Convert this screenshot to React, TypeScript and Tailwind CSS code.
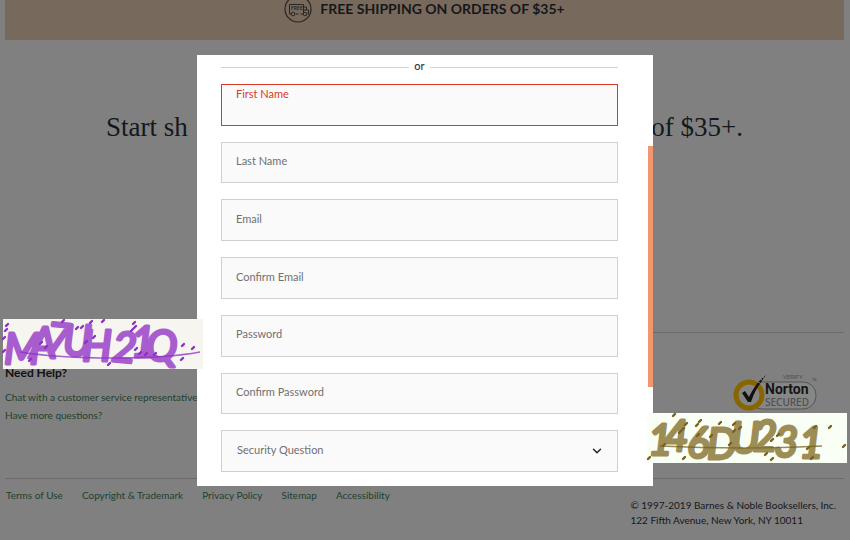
import React from "react";
import { ChevronDown } from "lucide-react";

type Dot = [number, number];

interface ScrawlProps {
  label: string;
  letters: string;
  xs: string;
  ys: string;
  rotate: string;
  ink: string;
  dotInk: string;
  paper: string;
  line: string;
  dots: Dot[];
}

function Scrawl({ label, letters, xs, ys, rotate, ink, dotInk, paper, line, dots }: ScrawlProps) {
  return (
    <svg width="200" height="50" viewBox="0 0 200 50" role="img" aria-label={label} className="block overflow-visible">
      <rect width="200" height="50" fill={paper} />
      <text
        x={xs}
        y={ys}
        rotate={rotate}
        fill={ink}
        stroke={ink}
        strokeWidth="3"
        strokeLinejoin="round"
        fontSize="42"
        fontStyle="italic"
        fontFamily="Lato, sans-serif"
      >
        {letters}
      </text>
      <path d={line} fill="none" stroke={dotInk} strokeWidth="1.4" opacity="0.75" />
      {dots.map(([x, y]) => (
        <path key={`${x}-${y}`} d={`M${x - 1} ${y + 1}l2-2`} stroke={dotInk} strokeWidth="2.4" strokeLinecap="round" />
      ))}
    </svg>
  );
}

const purpleDots: Dot[] = [
  [4, 6], [3, 11], [1, 19], [1, 32], [60, 2], [38, 24], [43, 28], [27, 41], [74, 9], [79, 8], [88, 3],
  [100, 2], [83, 23], [91, 18], [106, 45], [131, 4], [132, 8], [129, 11], [133, 30], [137, 34], [143, 35],
  [152, 35], [180, 26], [190, 29], [179, 40],
];
const oliveDots: Dot[] = [
  [2, 45], [27, 2], [17, 32], [37, 45], [39, 11], [36, 16], [33, 19], [53, 8], [50, 12], [51, 22], [64, 23],
  [73, 10], [87, 11], [87, 18], [93, 15], [83, 31], [119, 41], [125, 46], [125, 27], [131, 22], [165, 45],
  [161, 35], [168, 14], [183, 14], [197, 33],
];

function TruckBadge() {
  return (
    <svg width="28" height="28" viewBox="0 0 28 28" fill="none" stroke="#292724" aria-hidden="true">
      <circle cx="14" cy="14" r="13" strokeWidth="1.2" />
      <path d="M7 19H5.500V9.500h14V19h-3M11.500 19h3M19.500 12h3v3h2v4h-1M19.500 15h3" />
      <circle cx="9" cy="19" r="1.800" />
      <circle cx="21" cy="19" r="1.800" />
      <text x="7" y="15" fontSize="5" fontWeight="700" fontFamily="Lato, sans-serif" fill="#292724" stroke="none">
        FREE
      </text>
    </svg>
  );
}

function NortonSeal() {
  return (
    <svg width="86" height="42" viewBox="0 0 86 42" role="img" aria-label="Norton Secured">
      <rect x="16" y="8" width="67" height="27" rx="13" fill="#868686" stroke="#555" />
      <circle cx="16" cy="21" r="13" fill="#858585" stroke="#876600" strokeWidth="5" />
      <path d="M9 19l3-2 4 6C20 15 25 7 33 1 27 9 21 18 18 28h-3z" fill="#111" />
      <path d="M25 8l2 1m0-4l2 1m0-3l2 1" stroke="#808080" />
      <text x="50" y="5" fontSize="6" fontFamily="Roboto, sans-serif" fill="#4d4d4d">VERIFY</text>
      <text x="32" y="20" fontSize="14" fontWeight="700" fontFamily="Roboto, sans-serif" fill="#151515">Norton</text>
      <text x="32" y="32" fontSize="10" fontWeight="500" fontFamily="'Noto Sans', sans-serif" fill="#505050">SECURED</text>
      <text x="79" y="7" fontSize="3" fontFamily="Roboto, sans-serif" fill="#444">TM</text>
    </svg>
  );
}

const fields = [
  { name: "Last Name", type: "text" },
  { name: "Email", type: "email" },
  { name: "Confirm Email", type: "email" },
  { name: "Password", type: "password" },
  { name: "Confirm Password", type: "password" },
];
const legal = ["Terms of Use", "Copyright & Trademark", "Privacy Policy", "Sitemap", "Accessibility"];

function SignUpDialog() {
  return (
    <div
      role="dialog"
      aria-label="Create an account"
      className="absolute inset-x-[197px] top-[55px] bottom-[54px] flex flex-col bg-white pt-1 pr-[35px] pb-[14px] pl-6"
    >
      <div className="flex h-[25px] shrink-0 items-start gap-[5px] text-[11px] leading-[14px] text-[#333]">
        <span className="mt-2 h-px flex-1 bg-[#d2d2d2]" />
        <span className="font-medium">or</span>
        <span className="mt-2 h-px flex-1 bg-[#d2d2d2]" />
      </div>
      <form className="grid flex-1 auto-rows-fr gap-4 text-[11px]">
        <div className="flex min-h-0 flex-col border border-[#d9382b] bg-[#fafafa] px-[14px] pt-px">
          <label htmlFor="first-name" className="leading-4 text-[#df3526]">First Name</label>
          <input id="first-name" type="text" className="min-h-0 w-full flex-1 bg-transparent outline-none" />
        </div>
        {fields.map((f) => (
          <input
            key={f.name}
            type={f.type}
            aria-label={f.name}
            placeholder={f.name}
            className="min-h-0 w-full border border-[#d0d0d0] bg-[#fafafa] px-[14px] pb-[2px] text-[#333] outline-none placeholder:text-[#707070]"
          />
        ))}
        <div className="relative flex min-h-0">
          <select
            aria-label="Security Question"
            className="w-full appearance-none border border-[#d0d0d0] bg-[#fafafa] px-[15px] pb-[2px] text-[#707070] outline-none"
          >
            <option>Security Question</option>
          </select>
          <ChevronDown className="pointer-events-none absolute top-[14px] right-[14px] size-[14px] text-[#222]" strokeWidth={2.5} />
        </div>
      </form>
      <span className="absolute top-[91px] right-0 h-[241px] w-[5px] bg-[#f3956f]" />
    </div>
  );
}

export default function App() {
  return (
    <div className="relative flex min-h-screen flex-col overflow-hidden bg-[#808080] pr-[6px] pl-[5px] font-['Lato',sans-serif] text-[#15181a]">
      <header className="flex h-10 items-start justify-center gap-2 bg-[#78695d] text-[14px] leading-[18px] font-bold">
        <span className="-mt-[5px]"><TruckBadge /></span>
        <p>FREE SHIPPING ON ORDERS OF $35+</p>
      </header>
      <main className="flex h-[292px] items-start justify-between px-[101px] pt-[69px]">
        <h1 className="flex flex-1 justify-between font-['Liberation_Serif',serif] text-[27px] leading-9">
          <span>Start sh</span>
          <span>of $35+.</span>
        </h1>
      </main>
      <footer className="flex flex-1 flex-col text-[10px]">
        <section className="flex h-[147px] items-start justify-between border-y border-[#6b6b6b] pt-[31px] pr-[25px]">
          <div className="leading-[18px] text-[#21402f]">
            <h2 className="mb-[6px] text-[12px] font-bold text-[#111]">Need Help?</h2>
            <p><a href="#chat">Chat with a customer service representative</a></p>
            <p><a href="#questions">Have more questions?</a></p>
          </div>
          <div className="pt-[10px]"><NortonSeal /></div>
        </section>
        <section className="flex justify-between pr-2">
          <nav className="flex gap-[19px] pt-[7px] pl-px leading-[18px] text-[#21402f]">
            {legal.map((t) => (
              <a key={t} href="#legal">{t}</a>
            ))}
          </nav>
          <p className="pt-[19px] leading-[15px]">
            © 1997-2019 Barnes &amp; Noble Booksellers, Inc.
            <br />
            122 Fifth Avenue, New York, NY 10011
          </p>
        </section>
      </footer>
      <SignUpDialog />
      <div className="absolute top-[319px] left-[3px]">
        <Scrawl
          label="Purple scrawl"
          letters="MA7UH21Q"
          xs="1 27 42 60 79 108 128 143"
          ys="45 39 33 37 42 42 38 42"
          rotate="0 0 5 0 0 5 0 0"
          ink="#a85dce"
          dotInk="#8e2fc0"
          paper="#f6f5f0"
          line="M17 33Q55 39 110 39T197 33"
          dots={purpleDots}
        />
      </div>
      <div className="absolute top-[413px] right-[3px]">
        <Scrawl
          label="Olive scrawl"
          letters="146DU231"
          xs="1 17 40 60 84 106 127 152"
          ys="42 38 45 46 40 38 44 45"
          rotate="0 0 0 0 0 0 0 0"
          ink="#9c8d57"
          dotInk="#77601d"
          paper="#fafff6"
          line="M13 33Q95 37 175 33"
          dots={oliveDots}
        />
      </div>
    </div>
  );
}
